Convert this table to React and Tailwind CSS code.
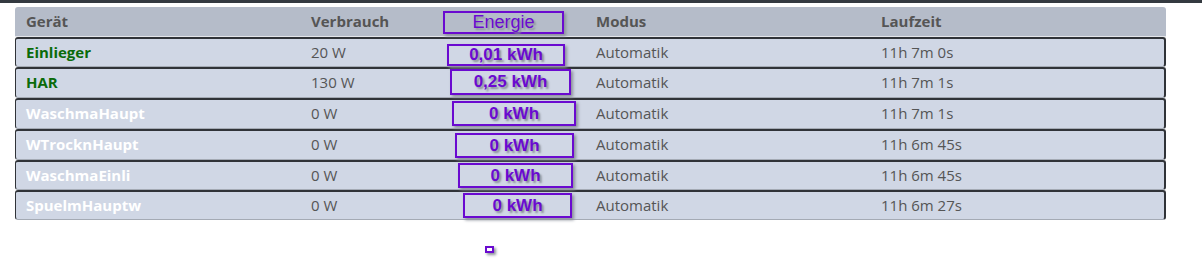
import React from 'react';

const rows = [
  { name: 'Einlieger', on: true, power: '20 W', energy: '0,01 kWh', time: '11h 7m 0s', h: 'h-[30px]', box: 'ml-[13px] mt-[5px] w-[118px] h-[22px]' },
  { name: 'HAR', on: true, power: '130 W', energy: '0,25 kWh', time: '11h 7m 1s', h: 'h-[31px]', box: 'ml-[16px] mt-[0px] w-[121px] h-[26px]' },
  { name: 'WaschmaHaupt', on: false, power: '0 W', energy: '0 kWh', time: '11h 7m 1s', h: 'h-[31px]', box: 'ml-[18px] mt-[1px] w-[124px] h-[25px]' },
  { name: 'WTrocknHaupt', on: false, power: '0 W', energy: '0 kWh', time: '11h 6m 45s', h: 'h-[31px]', box: 'ml-[21px] mt-[2px] w-[119px] h-[25px]' },
  { name: 'WaschmaEinli', on: false, power: '0 W', energy: '0 kWh', time: '11h 6m 45s', h: 'h-[30px]', box: 'ml-[24px] mt-[1px] w-[115px] h-[25px]' },
  { name: 'SpuelmHauptw', on: false, power: '0 W', energy: '0 kWh', time: '11h 6m 27s', h: 'h-[30px]', box: 'ml-[29px] mt-[1px] w-[109px] h-[25px]' },
];

const cols = 'grid grid-cols-[285px_133px_152px_285px_1fr] items-start';

const App = () => {
  return (
    <div className="w-[1202px] h-[267px] bg-white font-['Open_Sans',sans-serif] text-[15px]">
      {/* top bar */}
      <div className="h-[3px] bg-[#343a40]" />

      <div className="ml-[15px] mt-[4px] w-[1151px]">
        {/* header */}
        <div className={`${cols} h-[30px] bg-[#b5bcc9] rounded-t-[3px] border-b border-b-[#e4e6ea] font-bold text-[#555]`}>
          <div className="pl-[11px] leading-[29px]">Gerät</div>
          <div className="pl-[11px] leading-[29px]">Verbrauch</div>
          <div className="pt-[4px]">
            <div className="ml-[10px] w-[121px] h-[23px] border-2 border-[#6a0ad0] shadow-[2px_2px_3px_#8a8f99] flex items-center justify-center font-['Liberation_Sans',Arial,sans-serif] text-[18px] font-normal text-[#6a0ad0] [text-shadow:2px_2px_2px_#8a8f99]">
              Energie
            </div>
          </div>
          <div className="pl-[11px] leading-[29px]">Modus</div>
          <div className="pl-[11px] leading-[29px]">Laufzeit</div>
        </div>

        {/* rows */}
        {rows.map((r) => (
          <div
            key={r.name}
            className={`${cols} ${r.h} bg-[#d0d7e5] border-t-2 border-t-[#303338] border-l border-l-[#303338] border-r-2 border-r-[#303338] border-b border-b-[#a4aab4] rounded-[3px] text-[#555]`}
          >
            <div className={`pl-[10px] leading-[27px] font-bold ${r.on ? 'text-[#0a6b0a]' : 'text-white'}`}>
              {r.name}
            </div>
            <div className="pl-[10px] leading-[27px]">{r.power}</div>
            <div className="relative z-10">
              <div
                className={`${r.box} border-2 border-[#6a0ad0] shadow-[2px_2px_3px_#8a8f99] flex items-center justify-center font-['Liberation_Sans',Arial,sans-serif] text-[17px] font-bold text-[#6a0ad0] [text-shadow:2px_2px_2px_#8a8f99]`}
              >
                {r.energy}
              </div>
            </div>
            <div className="pl-[10px] leading-[27px]">Automatik</div>
            <div className="pl-[10px] leading-[27px]">{r.time}</div>
          </div>
        ))}
      </div>

      {/* stray marker */}
      <div className="ml-[485px] mt-[26px] w-[9px] h-[7px] border-2 border-[#6a0ad0] shadow-[2px_2px_3px_#8a8f99]" />
    </div>
  );
};

export default App;
